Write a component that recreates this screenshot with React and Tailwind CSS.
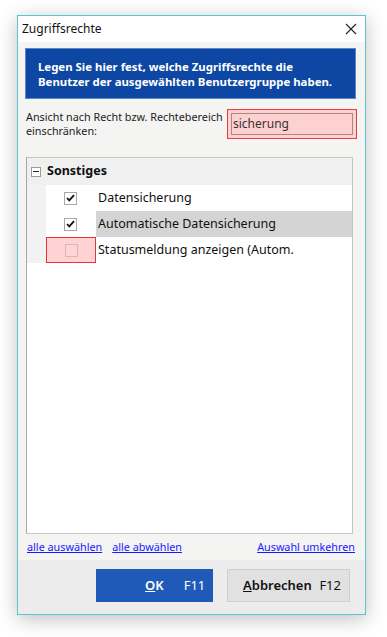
import React from "react";

const font = { fontFamily: '"Noto Sans", "Open Sans", sans-serif' };

const CheckBox = ({ checked, faded }) => (
  <div
    className={`w-[13px] h-[13px] border flex items-center justify-center ${
      faded ? "border-[#e0b4b4] bg-[#ffd6d6]" : "border-[#a8a8a8] bg-white"
    }`}
  >
    {checked && (
      <svg width="9" height="8" viewBox="0 0 9 8">
        <path d="M1 4 L3.3 6.4 L8 1.2" stroke="#111" strokeWidth="1.8" fill="none" />
      </svg>
    )}
  </div>
);

const Row = ({ label, checked, selected, marked }) => (
  <div className="flex h-[26px] items-stretch">
    <div className="w-[19px] bg-[#f2f2f2]" />
    <div
      className={`w-[50px] flex items-center pl-[18px] ${
        marked ? "bg-[#ffd3d3] border border-[#e8333b] pl-[17px]" : ""
      }`}
    >
      <CheckBox checked={checked} faded={marked} />
    </div>
    <div
      className={`flex-1 flex items-center pl-[2px] text-[12.5px] text-[#111] ${
        selected ? "bg-[#d4d4d4]" : ""
      }`}
    >
      {label}
    </div>
  </div>
);

export default function App() {
  return (
    <div className="min-h-[637px] bg-white pt-[15px] pl-[17px]" style={font}>
      <div className="w-[349px] h-[600px] border border-[#5cc6cf] bg-[#f4f4f3] flex flex-col shadow-[0_4px_18px_rgba(0,0,0,0.25)]">
        {/* Title bar */}
        <div className="h-[27px] bg-white flex items-center justify-between pl-[4px] pr-[8px]">
          <span className="text-[12px] text-[#111]">Zugriffsrechte</span>
          <svg width="12" height="12" viewBox="0 0 12 12">
            <path d="M1 1 L11 11 M11 1 L1 11" stroke="#222" strokeWidth="1.1" />
          </svg>
        </div>

        {/* Content */}
        <div className="flex-1 flex flex-col px-[7px] pt-[6px]">
          <div className="h-[51px] w-[331px] bg-[#0d47a3] border border-[#5a86c8] flex flex-col justify-center pl-[12px] text-white font-bold text-[11.4px] leading-[15px]">
            <span>Legen Sie hier fest, welche Zugriffsrechte die</span>
            <span>Benutzer der ausgewählten Benutzergruppe haben.</span>
          </div>

          <div className="flex items-start mt-[10px]">
            <div className="w-[202px] pl-[1px] pt-[1px] text-[10.8px] leading-[14px] text-[#222]">
              Ansicht nach Recht bzw. Rechtebereich einschränken:
            </div>
            <div className="w-[130px] h-[30px] border border-[#ec3a42] bg-[#ffd0d0] p-[3px]">
              <div className="h-full border border-[#a58a8a] flex items-center pl-[1px] text-[12px] text-[#333]">
                sicherung
              </div>
            </div>
          </div>

          {/* List */}
          <div className="mt-[18px] ml-[1px] w-[327px] h-[377px] bg-white border border-[#c6c6c6] border-l-[#a8a8a8] flex flex-col">
            <div className="h-[27px] bg-[#f0f0f0] flex items-center pl-[4px]">
              <div className="w-[10px] h-[10px] border border-[#9a9a9a] bg-white flex items-center justify-center">
                <div className="w-[6px] h-[1px] bg-[#222]" />
              </div>
              <span className="ml-[6px] font-bold text-[12.5px] text-[#111]">Sonstiges</span>
            </div>
            <Row label="Datensicherung" checked />
            <Row label="Automatische Datensicherung" checked selected />
            <Row label="Statusmeldung anzeigen (Autom." marked />
          </div>

          <div className="flex items-center h-[26px] text-[10.8px] text-[#1a1aff] underline">
            <span className="ml-[2px]">alle auswählen</span>
            <span className="ml-[10px]">alle abwählen</span>
            <span className="ml-auto mr-[3px]">Auswahl umkehren</span>
          </div>
        </div>

        {/* Footer */}
        <div className="h-[55px] bg-[#ececec] flex justify-end items-start pt-[9px] pr-[15px] gap-[14px]">
          <button className="w-[117px] h-[33px] bg-[#1f5ab8] text-white text-[13px] font-semibold flex items-center">
            <span className="ml-[49px]"><u>O</u>K</span>
            <span className="ml-[20px] font-normal">F11</span>
          </button>
          <button className="w-[123px] h-[33px] bg-[#e1e1e1] border border-[#cfcfcf] text-[#111] text-[13px] flex items-center">
            <span className="ml-[15px] font-semibold"><u>A</u>bbrechen</span>
            <span className="ml-auto mr-[8px]">F12</span>
          </button>
        </div>
      </div>
    </div>
  );
}
